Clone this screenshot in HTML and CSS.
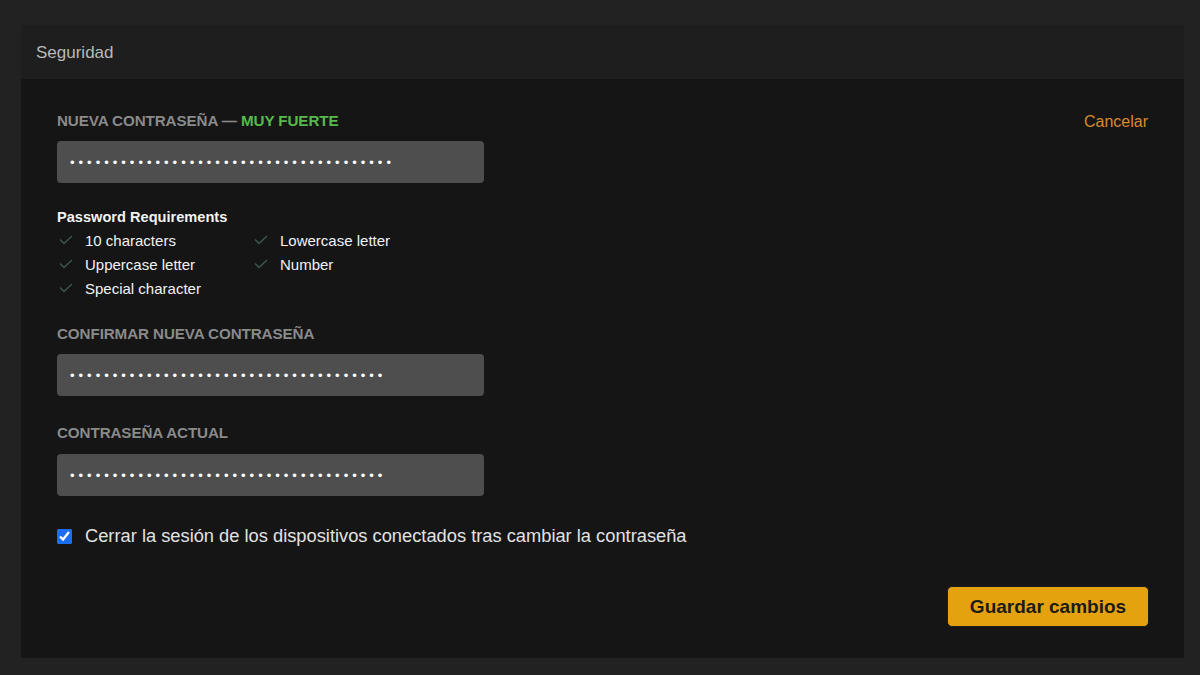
FILE: index.html
```html
<!DOCTYPE html>
<html lang="es">
<head>
<meta charset="utf-8">
<title>Seguridad</title>
<link rel="stylesheet" href="styles.css">
</head>
<body>
<section class="panel">
  <header class="panel-head">Seguridad</header>
  <div class="panel-body">
    <div class="top-row">
      <div class="label">Nueva contraseña — <span class="strong">Muy fuerte</span></div>
      <a class="cancel" href="#">Cancelar</a>
    </div>
    <div class="field"><span class="dots">••••••••••••••••••••••••••••••••••••••</span></div>

    <div class="reqs">
      <div class="reqs-title">Password Requirements</div>
      <ul class="reqs-grid">
        <li><svg class="chk" viewBox="0 0 14 10" width="14" height="10"><path d="M1 4.5 L5 8.5 L13 1"/></svg>10 characters</li>
        <li><svg class="chk" viewBox="0 0 14 10" width="14" height="10"><path d="M1 4.5 L5 8.5 L13 1"/></svg>Lowercase letter</li>
        <li><svg class="chk" viewBox="0 0 14 10" width="14" height="10"><path d="M1 4.5 L5 8.5 L13 1"/></svg>Uppercase letter</li>
        <li><svg class="chk" viewBox="0 0 14 10" width="14" height="10"><path d="M1 4.5 L5 8.5 L13 1"/></svg>Number</li>
        <li><svg class="chk" viewBox="0 0 14 10" width="14" height="10"><path d="M1 4.5 L5 8.5 L13 1"/></svg>Special character</li>
      </ul>
    </div>

    <div class="label label-gap">Confirmar nueva contraseña</div>
    <div class="field"><span class="dots">•••••••••••••••••••••••••••••••••••••</span></div>

    <div class="label label-gap2">Contraseña actual</div>
    <div class="field"><span class="dots">•••••••••••••••••••••••••••••••••••••</span></div>

    <label class="check-row">
      <input type="checkbox" class="cb" checked>
      <span>Cerrar la sesión de los dispositivos conectados tras cambiar la contraseña</span>
    </label>

    <div class="actions">
      <button class="save" type="button">Guardar cambios</button>
    </div>
  </div>
</section>
</body>
</html>
```
FILE: styles.css
```css
* { box-sizing: border-box; }
html, body { margin: 0; padding: 0; }
body {
  background: #222222;
  font-family: "Liberation Sans", Arial, sans-serif;
  padding: 25px 16px 18px 21px;
  height: 675px;
}
.panel {
  width: 1163px;
  background: #151515;
}
.panel-head {
  height: 54px;
  background: #1e1e1e;
  color: #b9b9b9;
  font-size: 17px;
  padding: 2px 0 0 15px;
  display: flex;
  align-items: center;
}
.panel-body {
  padding: 32px 35px 31px 36px;
  display: flex;
  flex-direction: column;
}
.top-row {
  display: flex;
  justify-content: space-between;
  align-items: center;
  margin-bottom: 10px;
}
.label {
  font-weight: bold;
  font-size: 15.2px;
  line-height: 20px;
  text-transform: uppercase;
  color: #8a8a8a;
  letter-spacing: -0.1px;
}
.strong { color: #56b94c; }
.cancel {
  color: #d98a2c;
  font-size: 16px;
  text-decoration: none;
  margin-right: 1px;
  padding-top: 1px;
}
.field {
  width: 427px;
  height: 42px;
  background: #4e4e4e;
  border-radius: 4px;
  display: flex;
  align-items: center;
  padding-left: 13px;
}
.dots {
  color: #ffffff;
  font-size: 13px;
  letter-spacing: 4px;
  line-height: 1;
}
.reqs { margin-top: 25px; }
.reqs-title {
  color: #f2f2f2;
  font-weight: bold;
  font-size: 14.6px;
  line-height: 18px;
  margin-bottom: 2px;
}
.reqs-grid {
  list-style: none;
  margin: 0;
  padding: 0;
  display: grid;
  grid-template-columns: 195px 200px;
  grid-auto-rows: 24px;
}
.reqs-grid li {
  display: flex;
  align-items: center;
  color: #f2f2f2;
  font-size: 15px;
}
.chk {
  margin-left: 2px;
  margin-right: 12px;
  fill: none;
  stroke: #3b5a4a;
  stroke-width: 1.4;
}
.label-gap { margin-top: 24px; margin-bottom: 10px; }
.label-gap2 { margin-top: 27px; margin-bottom: 11px; }
.check-row {
  margin-top: 29px;
  display: flex;
  align-items: center;
  color: #e2e2e2;
  font-size: 18.3px;
  line-height: 22px;
}
.cb {
  width: 15px;
  height: 15px;
  margin: 0 13px 0 0;
  accent-color: #1a6ef0;
}
.actions {
  display: flex;
  justify-content: flex-end;
  margin-top: 39px;
}
.save {
  width: 202px;
  height: 41px;
  background: #e4a20f;
  border: 1px solid #1c1c1c;
  border-radius: 5px;
  color: #1b1b1b;
  font-family: "Liberation Sans", Arial, sans-serif;
  font-size: 19px;
  font-weight: bold;
  cursor: pointer;
}
```
